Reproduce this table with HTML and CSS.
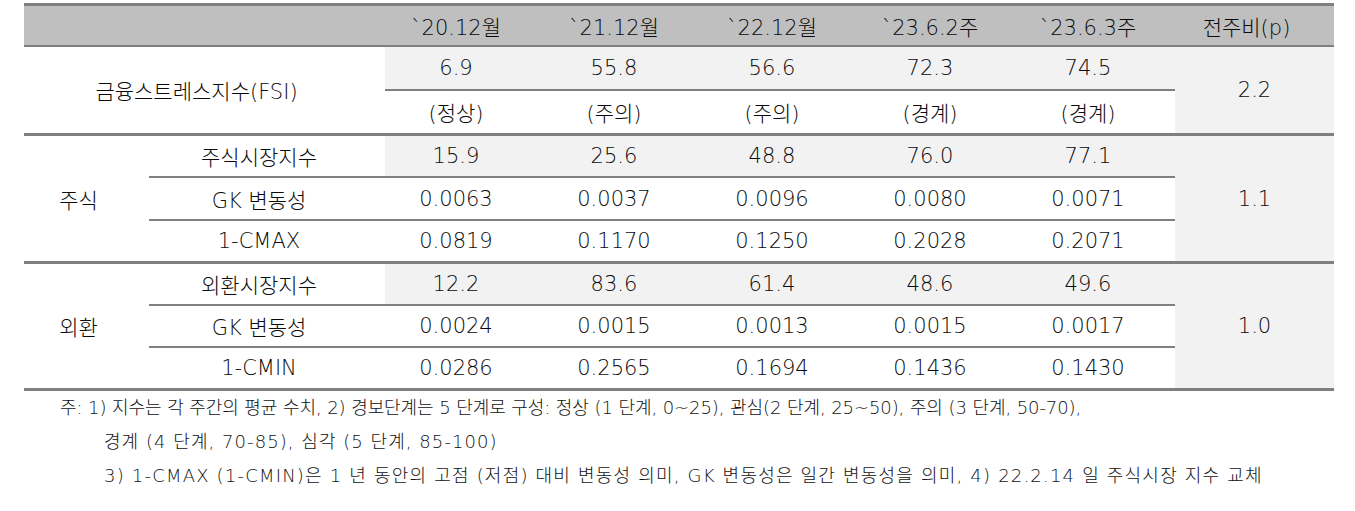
FILE: index.html
```html
<!DOCTYPE html>
<html lang="ko">
<head>
<meta charset="utf-8">
<title>금융스트레스지수</title>
<link rel="stylesheet" href="styles.css">
</head>
<body>
<div class="page">
  <table class="fsi-table">
    <colgroup>
      <col class="c-cat">
      <col class="c-sub">
      <col class="c-data">
      <col class="c-data">
      <col class="c-data">
      <col class="c-data">
      <col class="c-data">
      <col class="c-last">
    </colgroup>
    <thead>
      <tr class="r-head">
        <th colspan="2"></th>
        <th>`20.12월</th>
        <th>`21.12월</th>
        <th>`22.12월</th>
        <th>`23.6.2주</th>
        <th>`23.6.3주</th>
        <th>전주비(p)</th>
      </tr>
    </thead>
    <tbody>
      <tr class="r-fsi1">
        <td class="label span sec" colspan="2" rowspan="2">금융스트레스지수(FSI)</td>
        <td class="shade sub">6.9</td>
        <td class="shade sub">55.8</td>
        <td class="shade sub">56.6</td>
        <td class="shade sub">72.3</td>
        <td class="shade sub">74.5</td>
        <td class="shade span sec diff" rowspan="2">2.2</td>
      </tr>
      <tr class="r-fsi2">
        <td class="sec">(정상)</td>
        <td class="sec">(주의)</td>
        <td class="sec">(주의)</td>
        <td class="sec">(경계)</td>
        <td class="sec">(경계)</td>
      </tr>

      <tr class="r-a">
        <td class="label span sec" rowspan="3">주식</td>
        <td class="label sub">주식시장지수</td>
        <td class="shade sub">15.9</td>
        <td class="shade sub">25.6</td>
        <td class="shade sub">48.8</td>
        <td class="shade sub">76.0</td>
        <td class="shade sub">77.1</td>
        <td class="shade span sec diff" rowspan="3">1.1</td>
      </tr>
      <tr class="r-b">
        <td class="label sub">GK 변동성</td>
        <td class="sub">0.0063</td>
        <td class="sub">0.0037</td>
        <td class="sub">0.0096</td>
        <td class="sub">0.0080</td>
        <td class="sub">0.0071</td>
      </tr>
      <tr class="r-c">
        <td class="label sec">1-CMAX</td>
        <td class="sec">0.0819</td>
        <td class="sec">0.1170</td>
        <td class="sec">0.1250</td>
        <td class="sec">0.2028</td>
        <td class="sec">0.2071</td>
      </tr>

      <tr class="r-a">
        <td class="label span sec" rowspan="3">외환</td>
        <td class="label sub">외환시장지수</td>
        <td class="shade sub">12.2</td>
        <td class="shade sub">83.6</td>
        <td class="shade sub">61.4</td>
        <td class="shade sub">48.6</td>
        <td class="shade sub">49.6</td>
        <td class="shade span sec diff" rowspan="3">1.0</td>
      </tr>
      <tr class="r-b2">
        <td class="label sub">GK 변동성</td>
        <td class="sub">0.0024</td>
        <td class="sub">0.0015</td>
        <td class="sub">0.0013</td>
        <td class="sub">0.0015</td>
        <td class="sub">0.0017</td>
      </tr>
      <tr class="r-c">
        <td class="label sec">1-CMIN</td>
        <td class="sec">0.0286</td>
        <td class="sec">0.2565</td>
        <td class="sec">0.1694</td>
        <td class="sec">0.1436</td>
        <td class="sec">0.1430</td>
      </tr>
    </tbody>
  </table>

  <div class="notes">
    <div class="note first">주: 1) 지수는 각 주간의 평균 수치, 2) 경보단계는 5 단계로 구성: 정상 (1 단계, 0~25), 관심(2 단계, 25~50), 주의 (3 단계, 50-70),</div>
    <div class="note indent">경계 (4 단계, 70-85), 심각 (5 단계, 85-100)</div>
    <div class="note indent wide">3) 1-CMAX (1-CMIN)은 1 년 동안의 고점 (저점) 대비 변동성 의미, GK 변동성은 일간 변동성을 의미, 4) 22.2.14 일 주식시장 지수 교체</div>
  </div>
</div>
</body>
</html>
```

FILE: styles.css
```css
html, body {
  margin: 0;
  padding: 0;
  background: #ffffff;
}

.page {
  padding: 3px 21px 0 24px;
  color: #111111;
}

.fsi-table {
  width: 1310px;
  table-layout: fixed;
  border-collapse: separate;
  border-spacing: 0;
  font-family: "DejaVu Sans", "Noto Sans CJK KR", sans-serif;
  font-weight: 300;
  font-size: 21px;
  color: #0a0a0a;
}

.c-cat { width: 125px; }
.c-sub { width: 236px; }
.c-data { width: 158px; }
.c-last { width: 159px; }

.fsi-table th,
.fsi-table td {
  box-sizing: border-box;
  padding: 0 16px 0 0;
  text-align: center;
  vertical-align: middle;
  white-space: nowrap;
  font-weight: 300;
}

.fsi-table th {
  background: #bfbfbf;
  border-top: 3px solid #7f7f7f;
  border-bottom: 2px solid #7f7f7f;
  height: 44px;
}

.fsi-table td.diff {
  padding-right: 0;
}

.shade {
  background: #f2f2f2;
}

.sub {
  border-bottom: 2px solid #7f7f7f;
}

.sec {
  border-bottom: 3px solid #7f7f7f;
}

.r-fsi1 > td { height: 44px; }
.r-fsi2 > td { height: 45px; }
.r-a > td { height: 42px; }
.r-b > td { height: 43px; }
.r-b2 > td { height: 42px; }
.r-c > td { height: 43px; }
.fsi-table td.span { height: auto; }

.notes {
  font-family: "DejaVu Sans", "Noto Sans CJK KR", sans-serif;
  font-weight: 300;
  font-size: 18px;
  line-height: 34px;
  color: #111111;
  white-space: nowrap;
}

.note.first {
  padding-left: 36px;
  letter-spacing: -0.08px;
}

.note.indent {
  padding-left: 80px;
  letter-spacing: 1.05px;
}

.note.indent.wide {
  letter-spacing: 1.2px;
}
```
